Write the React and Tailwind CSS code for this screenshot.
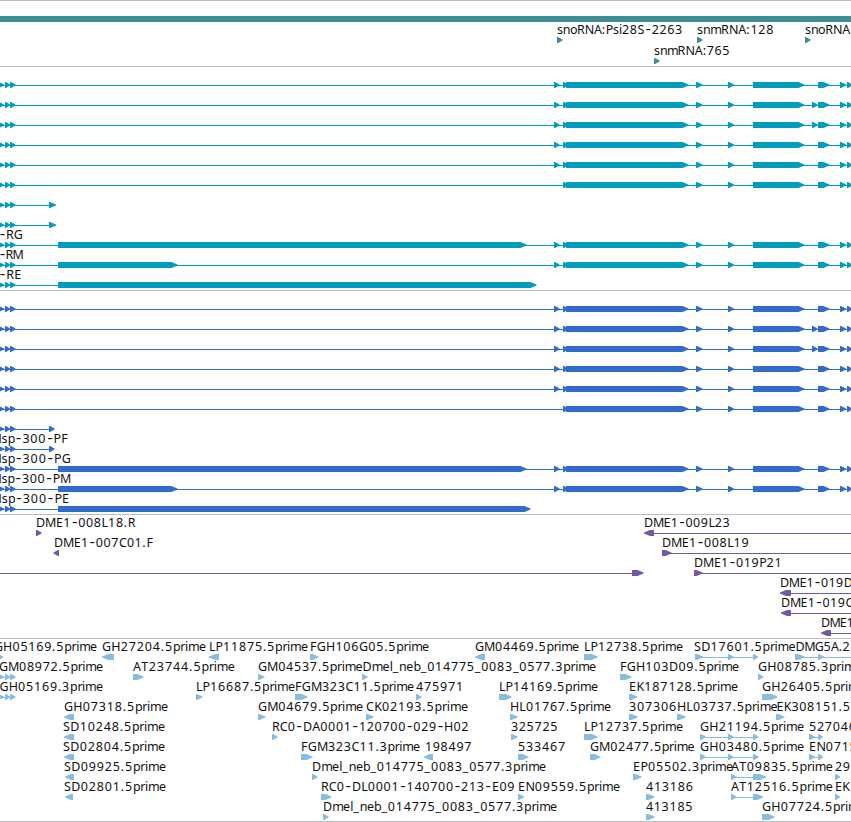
// Approximate advance of each character at the label size
const ADVANCE = {
  ":": 4, ".": 4.1, "-": 7.2, _: 6.3, "1": 7.8,
  A: 8, C: 8, D: 9.2, E: 7.3, F: 6.8, G: 9.1, H: 9.2, K: 7.6, L: 6.5, M: 10.9,
  N: 9.2, P: 7.4, R: 7.8, S: 7.2, T: 7.2, O: 9.4,
  b: 7.2, e: 7, i: 3, l: 3, m: 10.6, n: 7.1, o: 7.3, p: 7.2, r: 4.6, s: 6,
};

const LEAD = [[-2, 4], [5, 10], [10, 15.5]];
const START = [554, 559.5];
const TAIL = [[563, 568], [566, 688.5], [696, 702.5], [728, 734], [753, 804.5], [818, 829.5], [840, 846], [847, 852.5]];
const TAIL_EXTRA = [...TAIL.slice(0, 5), [812, 817.5], ...TAIL.slice(5)];

// feature: { e: exons, from/to: connector, left: arrow direction }
// label: [text, start, end]
const full = (tail) => ({ features: [{ e: [...LEAD, START, ...tail] }] });

const transcripts = (shortEnd, lastEnd, names) => [
  full(TAIL),
  full(TAIL_EXTRA),
  full(TAIL_EXTRA),
  full(TAIL),
  full(TAIL),
  { features: [{ e: [...LEAD, ...TAIL] }] },
  { features: [{ e: [...LEAD, [49, shortEnd]] }] },
  { features: [{ e: [...LEAD, [49, shortEnd]] }], labels: names[0] },
  { features: [{ e: [...LEAD, [58, 526.5], START, ...TAIL] }], labels: names[1] },
  { features: [{ e: [...LEAD, [58, 177.5], START, ...TAIL] }], labels: names[2] },
  { features: [{ e: [...LEAD, [58, lastEnd]] }], labels: names[3] },
];

const rnaRows = [
  {
    labels: [["snoRNA:Psi28S-2263", 557.5, 682], ["snmRNA:128", 697.5, 773.5], ["snoRNA:Psi", 805.5]],
    features: [{ e: [[557, 562.5]] }, { e: [[697, 702.5]] }, { e: [[805, 810.5]] }],
  },
  { labels: [["snmRNA:765", 654.5, 729.5]], features: [{ e: [[654, 659.5]] }] },
];

const mrnaRows = transcripts(56, 536.5, [
  [],
  [["-RG", -0.5, 22]],
  [["-RM", -0.5, 22]],
  [["-RE", -0.5, 21]],
]);

const cdsRows = transcripts(54.5, 530.5, [
  [["Msp-300-PF", -9, 67.5]],
  [["Msp-300-PG", -9, 70.5]],
  [["Msp-300-PM", -9, 70.5]],
  [["Msp-300-PE", -9, 69]],
]);

const bacRows = [
  {
    labels: [["DME1-008L18.R", 36.5, 135], ["DME1-009L23", 644.5, 729.5]],
    features: [{ e: [[36, 41.5]] }, { e: [[644, 654]], left: true, to: 851 }],
  },
  {
    labels: [["DME1-007C01.F", 54.5, 152.5], ["DME1-008L19", 662.5, 748.5]],
    features: [{ e: [[53.5, 59]], left: true }, { e: [[662, 671.5]], to: 851 }],
  },
  {
    labels: [["DME1-019P21", 694.5, 781.5]],
    features: [{ e: [[632, 643.5]], from: 0 }, { e: [[694, 702.5]], to: 851 }],
  },
  { labels: [["DME1-019D", 780.5, 852]], features: [{ e: [[780, 791]], left: true, to: 851 }] },
  { labels: [["DME1-019O", 781.5, 854]], features: [{ e: [[781, 791]], left: true, to: 851 }] },
  { labels: [["DME1-", 821.5, 860]], features: [{ e: [[821, 831]], left: true, to: 851 }] },
];

const right = (...e) => ({ e });
const left = (...e) => ({ e, left: true });

const estRows = [
  {
    labels: [
      ["GH05169.5prime", -5.5, 96.5], ["GH27204.5prime", 102.5, 205.5], ["LP11875.5prime", 209.5, 307.5],
      ["FGH106G05.5prime", 310.5, 428.5], ["GM04469.5prime", 475.5, 578.5], ["LP12738.5prime", 584.5, 682.5],
      ["SD17601.5prime", 694.5, 795], ["DMG5A.2", 796, 849.5],
    ],
    features: [
      right([-2, 3]), left([102, 114]), left([209, 219]), right([310, 318.5]), left([475, 485]), right([584, 597.5]),
      right([695, 703], [728, 733.5], [753, 758]), { e: [[795, 804.5], [818, 824]], to: 851 },
    ],
  },
  {
    labels: [
      ["GM08972.5prime", -0.5, 102.5], ["AT23744.5prime", 133.5, 234.5], ["GM04537.5prime", 258.5, 362],
      ["Dmel_neb_014775_0083_0577.3prime", 363, 595.5], ["FGH103D09.5prime", 620.5, 738.5], ["GH08785.3prime", 758.5, 861.5],
    ],
    features: [
      right(...LEAD), right([133, 143.5]), right([258, 264.5]), right([362, 367.5]), right([620, 631.5]), right([758, 763.5]),
    ],
  },
  {
    labels: [
      ["GH05169.3prime", 0, 102.5], ["LP16687.5prime", 196.5, 294.5], ["FGM323C11.5prime", 295.5, 413.5],
      ["475971", 416.5, 463.5], ["LP14169.5prime", 499.5, 597.5], ["EK187128.5prime", 629.5, 737.5], ["GH26405.5prime", 762.5, 865.5],
    ],
    features: [
      right(...LEAD), right([196, 202.5]), right([295, 307.5]), right([416, 421.5]), right([499, 511.5]),
      right([629, 637.5]), right([762, 777.5]),
    ],
  },
  {
    labels: [
      ["GH07318.5prime", 64.5, 167.5], ["GM04679.5prime", 258.5, 362.5], ["CK02193.5prime", 366.5, 467.5],
      ["HL01767.5prime", 510.5, 610.5], ["307306", 629.5, 676.5], ["HL03737.5prime", 677.5, 777], ["EK308151.5", 777, 850],
    ],
    features: [
      left([64, 74]), right([258, 265.5]), right([366, 373.5]), right([510, 517.5]), right([629, 637.5]),
      right([677, 685.5]), right([776, 784.5]),
    ],
  },
  {
    labels: [
      ["SD10248.5prime", 63.5, 164.5], ["RC0-DA0001-120700-029-H02", 272.5, 468.5], ["325725", 511.5, 557.5],
      ["LP12737.5prime", 584.5, 682.5], ["GH21194.5prime", 700.5, 803.5], ["527046", 809.5, 856],
    ],
    features: [
      left([64, 74]), right([272, 277.5]), right([511, 517.5]), right([584, 597.5]),
      right([700, 705.5], [728, 733.5], [753, 758.5]), right([809, 815], [818, 823]),
    ],
  },
  {
    labels: [
      ["SD02804.5prime", 63.5, 164.5], ["FGM323C11.3prime", 301.5, 419.5], ["198497", 425.5, 471.5],
      ["533467", 518.5, 565.5], ["GM02477.5prime", 590.5, 694], ["GH03480.5prime", 700.5, 803.5], ["EN0715", 809.5, 857],
    ],
    features: [
      left([64, 74]), right([301, 312.5]), left([424, 433]), right([518, 528.5]), right([590, 600.5]),
      right([700, 705.5], [728, 733.5], [753, 758.5]), right([809, 815], [818, 823]),
    ],
  },
  {
    labels: [
      ["SD09925.5prime", 64.5, 165.5], ["Dmel_neb_014775_0083_0577.3prime", 312.5, 545.5],
      ["EP05502.3prime", 633.5, 732.5], ["AT09835.5prime", 731.5, 832.5], ["29", 835.5],
    ],
    features: [
      left([65, 74]), right([312, 317.5]), right([633, 641.5]), right([731, 736.5], [753, 766]), right([835, 840]),
    ],
  },
  {
    labels: [
      ["SD02801.5prime", 64.5, 165.5], ["RC0-DL0001-140700-213-E09", 321.5, 514.5], ["EN09559.5prime", 518.5, 619.5],
      ["413186", 646.5, 693], ["AT12516.5prime", 731.5, 832.5], ["EK", 835.5],
    ],
    features: [
      left([65, 73]), right([321, 331.5]), right([518, 524]), right([646, 654.5]),
      right([731, 736.5], [753, 763]), right([835, 840]),
    ],
  },
  {
    labels: [["Dmel_neb_014775_0083_0577.3prime", 323.5, 556.5], ["413185", 646.5, 692.5], ["GH07724.5prime", 762.5, 865.5]],
    features: [right([323, 328.5]), right([646, 654.5]), right([762, 774.5])],
  },
];

function exonPoints([a, b], isLeft) {
  const tip = Math.min(6, b - a - 1);
  return isLeft
    ? `${b},14 ${a + tip},14 ${a},16.5 ${a},17.5 ${a + tip},20 ${b},20`
    : `${a},14 ${b - tip},14 ${b},16.5 ${b},17.5 ${b - tip},20 ${a},20`;
}

function Feature({ e, from, to, left }) {
  const x1 = from ?? e[0][0] + 1;
  const x2 = to ?? e[e.length - 1][1] - 1;
  return (
    <g>
      {(e.length > 1 || from !== undefined || to !== undefined) && (
        <rect x={x1} y="17" width={x2 - x1} height="1" />
      )}
      {e.map((exon, i) => (
        <polygon key={i} points={exonPoints(exon, left)} />
      ))}
    </g>
  );
}

function Label({ text, start, end }) {
  const widths = [...text].map((c) => ADVANCE[c] ?? 7.8);
  const total = widths.reduce((a, b) => a + b, 0);
  const scale = end === undefined ? 1 : (end - start + 1.2) / total;
  let x = start - 0.6;
  const xs = widths.map((w, i) => {
    // wide hyphens sit a little left of their slot
    const at = text[i] === "-" ? x - 0.9 : x;
    x += w * scale;
    return at.toFixed(1);
  });
  return (
    <text x={xs.join(" ")} y="11" className="fill-[#111]">
      {text.split(/(-)/).map((part, i) =>
        part === "-" ? (
          <tspan key={i} className="font-['Liberation_Mono',monospace] text-[15px]">
            -
          </tspan>
        ) : (
          part
        )
      )}
    </text>
  );
}

function Row({ labels = [], features }) {
  return (
    <svg
      width="851"
      height="20"
      className="block shrink-0 overflow-visible fill-current font-['Noto_Sans',sans-serif] text-[12.5px]"
    >
      {features.map((f, i) => (
        <Feature key={i} {...f} />
      ))}
      {labels.map(([text, start, end]) => (
        <Label key={text + start} text={text} start={start} end={end} />
      ))}
    </svg>
  );
}

function Track({ rows, className }) {
  return (
    <section className={`flex flex-col border-t border-t-[#bebebe] pt-px ${className}`}>
      {rows.map((row, i) => (
        <Row key={i} {...row} />
      ))}
    </section>
  );
}

export default function App() {
  return (
    <div className="w-[851px] h-[822px] overflow-hidden bg-white">
      <section className="flex h-[66px] flex-col gap-px border-t border-t-[#bebebe] pt-[15px] text-[#3d8d94]">
        <div className="h-1.5 shrink-0 bg-[#3d8d94]" />
        {rnaRows.map((row, i) => (
          <Row key={i} {...row} />
        ))}
      </section>
      <Track rows={mrnaRows} className="pb-0.5 text-[#009dc0]" />
      <Track rows={cdsRows} className="pb-0.5 text-[#316ccd]" />
      <Track rows={bacRows} className="pb-0.5 text-[#7457a8]" />
      <Track rows={estRows} className="border-b border-b-[#bebebe] pb-px text-[#89bddf]" />
    </div>
  );
}
